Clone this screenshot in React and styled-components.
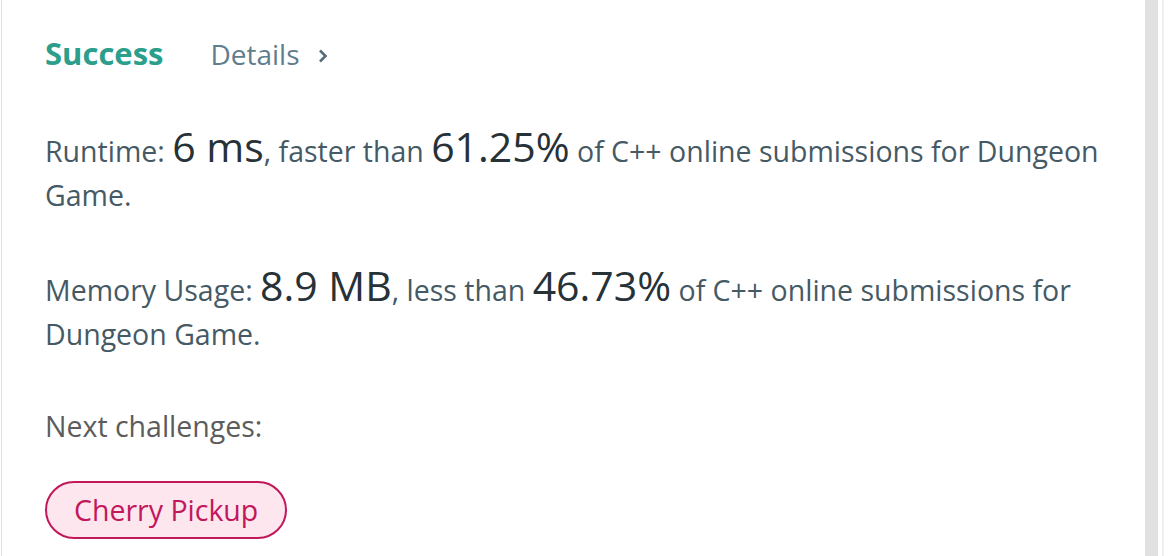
import React from 'react';
import styled, { createGlobalStyle } from 'styled-components';

const GlobalStyle = createGlobalStyle`
  html, body {
    margin: 0;
    padding: 0;
    background: #ffffff;
  }
  body {
    font-family: "Open Sans", "Noto Sans", sans-serif;
    overflow: hidden;
  }
`;

function App() {
  const challenges = ['Cherry Pickup'];

  return (
    <>
      <GlobalStyle />
      <Frame>
        <Panel>
          <Header>
            <Status>Success</Status>
            <DetailsLink>
              Details
              <Chevron viewBox="0 0 12 16" aria-hidden="true">
                <path d="M3 2.5 L8.5 8 L3 13.5" fill="none" stroke="currentColor" strokeWidth="2.6" />
              </Chevron>
            </DetailsLink>
          </Header>

          <Stat>
            Runtime: <Big>6 ms</Big>, faster than <Big>61.25%</Big> of C++ online submissions for Dungeon Game.
          </Stat>

          <Stat>
            Memory Usage: <Big>8.9 MB</Big>, less than <Big>46.73%</Big> of C++ online submissions for Dungeon Game.
          </Stat>

          <NextLabel>Next challenges:</NextLabel>

          <Tags>
            {challenges.map((c) => (
              <Tag key={c}>{c}</Tag>
            ))}
          </Tags>
        </Panel>
        <ScrollTrack />
        <Edge />
      </Frame>
    </>
  );
}

export default App;

const Frame = styled.div`
  display: flex;
  height: 556px;
  width: 1170px;
`;

const Panel = styled.div`
  flex: 1;
  border-left: 1px solid #e3e3e3;
  margin-left: 1px;
  padding: 32px 20px 0 43px;
  box-sizing: border-box;
`;

const ScrollTrack = styled.div`
  width: 13px;
  background: #e1e1e1;
`;

const Edge = styled.div`
  width: 8px;
  margin-left: 4px;
  border-left: 2px solid #f0f0f0;
  box-sizing: border-box;
`;

const Header = styled.div`
  display: flex;
  align-items: baseline;
  gap: 47px;
  line-height: 42px;
  margin-bottom: 51px;
`;

const Status = styled.span`
  font-size: 31px;
  font-weight: 700;
  color: #2b9e8c;
`;

const DetailsLink = styled.span`
  display: flex;
  align-items: center;
  gap: 17px;
  font-size: 28px;
  color: #607d8b;
`;

const Chevron = styled.svg`
  width: 12px;
  height: 16px;
  margin-top: 4px;
  color: #546e7a;
`;

const Stat = styled.p`
  margin: 0 0 48px;
  font-size: 28.5px;
  line-height: 44px;
  color: #455a64;
`;

const Big = styled.span`
  font-size: 41px;
  line-height: 1;
  color: #263238;
`;

const NextLabel = styled.p`
  margin: 0 0 33px;
  font-size: 28.5px;
  line-height: 44px;
  color: #5c5c5c;
`;

const Tags = styled.div`
  display: flex;
  gap: 12px;
`;

const Tag = styled.span`
  display: inline-flex;
  align-items: center;
  height: 58px;
  padding: 0 27px;
  box-sizing: border-box;
  border: 2px solid #c2185b;
  border-radius: 29px;
  background: #fde6ee;
  color: #c2185b;
  font-size: 28.5px;
`;
